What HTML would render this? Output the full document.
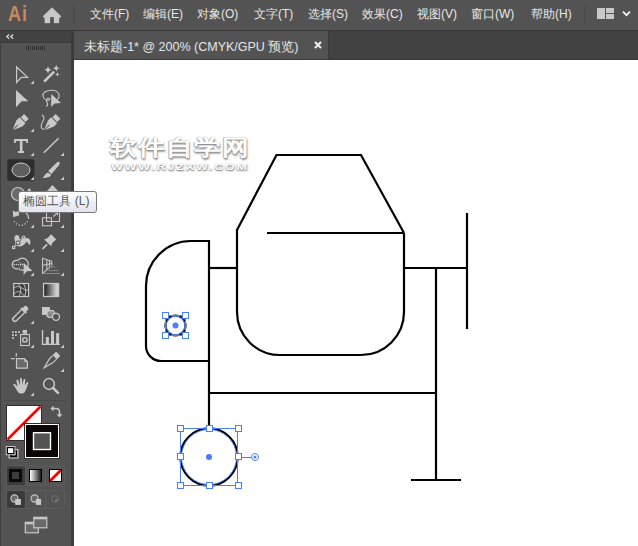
<!DOCTYPE html>
<html><head><meta charset="utf-8">
<style>
*{margin:0;padding:0;box-sizing:border-box}
html,body{width:638px;height:546px;overflow:hidden;background:#535353;font-family:"Liberation Sans",sans-serif}
.abs{position:absolute}
#menubar{left:0;top:0;width:638px;height:30px;background:#535353}
.mi{position:absolute;top:7px;font-size:12px;color:#e6e6e6;white-space:nowrap;line-height:15px}
#ai{left:8.3px;top:2.5px;font-size:21.5px;font-weight:bold;color:#c98862;line-height:22px;letter-spacing:1px;transform-origin:0 0;transform:scaleX(0.84)}
#tabbar{left:73px;top:30px;width:565px;height:30px;background:#424242;border-top:1px solid #393939;border-bottom:1px solid #3a3a3a}
#tab{left:74px;top:31px;width:254px;height:28px;background:#535353}
#tabtxt{left:84px;top:39.5px;font-size:12.5px;color:#e6e6e6;white-space:nowrap;line-height:15px}
#canvas{left:74px;top:60px;width:564px;height:486px;background:#fff}
#gap{left:71px;top:30px;width:3px;height:516px;background:#3c3c3c}
#panel{left:0;top:30px;width:71px;height:516px;background:#535353;border-left:1px solid #3f3f3f}
#phead{left:0;top:30px;width:71px;height:13px;background:#424242;border-top:1px solid #393939;border-bottom:1px solid #3a3a3a}
</style></head><body>
<div id="menubar" class="abs"></div>
<div id="ai" class="abs">Ai</div>
<svg class="abs" style="left:0;top:0" width="638" height="30">
  <path d="M52 7.6 L61.2 16.4 L59 18.3 V23 H54 V17 H50 V23 H44.8 V18.3 L42.8 16.4 Z" fill="#c8c8c8" stroke="#c8c8c8" stroke-width="0.3" stroke-linejoin="round"/>
  <rect x="73.5" y="5" width="1.5" height="20" fill="#4a4a4a"/>
  <rect x="584" y="5" width="2" height="20" fill="#4d4d4d"/>
  <rect x="597" y="8" width="8" height="11" fill="#c8c8c8"/>
  <rect x="606" y="8" width="8" height="5" fill="#c8c8c8"/>
  <rect x="606" y="14" width="8" height="5" fill="#c8c8c8"/>
  <path d="M623 11.6 L626.5 15.1 L630 11.6" stroke="#f0f0f0" stroke-width="1.9" fill="none"/>
</svg>
<div class="mi" style="left:90px">文件(F)</div>
<div class="mi" style="left:143px">编辑(E)</div>
<div class="mi" style="left:197px">对象(O)</div>
<div class="mi" style="left:254px">文字(T)</div>
<div class="mi" style="left:308px">选择(S)</div>
<div class="mi" style="left:362px">效果(C)</div>
<div class="mi" style="left:417px">视图(V)</div>
<div class="mi" style="left:471px">窗口(W)</div>
<div class="mi" style="left:531px">帮助(H)</div>

<div id="tabbar" class="abs"></div>
<div id="tab" class="abs"></div>
<div class="abs" style="left:328px;top:31px;width:1px;height:28px;background:#393939"></div>
<div id="tabtxt" class="abs">未标题-1* @ 200% (CMYK/GPU 预览)</div>
<svg class="abs" style="left:310px;top:37.3px" width="16" height="16">
  <path d="M5 5 L11 11 M11 5 L5 11" stroke="#f0f0f0" stroke-width="2"/>
</svg>
<div id="gap" class="abs"></div>
<div id="panel" class="abs"></div>
<div id="phead" class="abs"></div>
<svg class="abs" style="left:0;top:0" width="72" height="546">
<g fill="#c8c8c8" stroke="none">
  <!-- small triangles -->
  <path d="M30.5 84 H34 V80.5 Z"/>
  <path d="M30.5 132 H34 V128.5 Z"/>
  <path d="M30.5 156 H34 V152.5 Z"/><path d="M60.5 156 H64 V152.5 Z"/>
  <path d="M30.5 180 H34 V176.5 Z"/><path d="M60.5 180 H64 V176.5 Z"/>
  <path d="M30.5 228 H34 V224.5 Z"/><path d="M60.5 228 H64 V224.5 Z"/>
  <path d="M30.5 252 H34 V248.5 Z"/><path d="M60.5 252 H64 V248.5 Z"/>
  <path d="M30.5 276 H34 V272.5 Z"/><path d="M60.5 276 H64 V272.5 Z"/>
  <path d="M30.5 324 H34 V320.5 Z"/>
  <path d="M30.5 348 H34 V344.5 Z"/><path d="M60.5 348 H64 V344.5 Z"/>
  <path d="M60.5 372 H64 V368.5 Z"/>
  <path d="M30.5 396 H34 V392.5 Z"/>
</g>
<g fill="none" stroke="#c8c8c8" stroke-width="1.2">
  <!-- selection -->
  <path d="M16.6 67 V82.5 L21.4 77.4 H27.6 Z"/>
</g>
<g fill="#c8c8c8">
  <!-- direct selection -->
  <path d="M16 90 V107.2 L21.6 101.3 H28.3 Z"/>
  <!-- magic wand -->
  <path d="M43.2 80.7 L53.2 70.7 L55.1 72.6 L45.1 82.6 Z"/>
  <path d="M48.00 66.20 L49.13 68.67 L51.60 69.80 L49.13 70.93 L48.00 73.40 L46.87 70.93 L44.40 69.80 L46.87 68.67 Z"/>
  <path d="M56.30 65.10 L57.33 67.27 L59.50 68.30 L57.33 69.33 L56.30 71.50 L55.27 69.33 L53.10 68.30 L55.27 67.27 Z"/>
  <path d="M57.40 72.20 L58.11 73.69 L59.60 74.40 L58.11 75.11 L57.40 76.60 L56.69 75.11 L55.20 74.40 L56.69 73.69 Z"/>
  <!-- lasso arrow -->
  <path d="M51.2 94 V107 L54.5 103.5 L61 103 Z"/>
</g>
<g fill="none" stroke="#c8c8c8" stroke-width="1.1">
  <path d="M57.5 99.5 C60.5 96.5 59.5 90.5 51.5 90.3 C45.5 90.2 42.5 93 43 96 C43.4 98.5 46 100.3 48.8 100.2 C50.3 100 49.8 97.8 48 98.3 C45.8 99 46.3 101.5 47.2 102.8 C48 104 47.5 105.5 46.2 106.5"/>
</g>
<!-- pen -->
<g transform="translate(19.7 123.1) rotate(45) scale(0.92)" fill="#c8c8c8">
  <rect x="-3.6" y="-10.3" width="7.2" height="5"/>
  <path d="M-4.6 -4.3 H4.6 V0.5 L0.8 9.5 H-0.8 L-4.6 0.5 Z"/>
  <path d="M-0.5 9.5 V2.5 H0.5 V9.5 Z" fill="#535353"/>
</g>
<!-- curvature pen -->
<g transform="translate(51.3 123.1) rotate(45) scale(0.92)" fill="#c8c8c8">
  <rect x="-3.6" y="-10.3" width="7.2" height="5"/>
  <path d="M-4.6 -4.3 H4.6 V0.5 L0.8 9.5 H-0.8 L-4.6 0.5 Z"/>
  <path d="M-0.5 9.5 V2.5 H0.5 V9.5 Z" fill="#535353"/>
</g>
<path d="M42 115 C44 116.5 44.5 118 43.5 120 C41.5 123.5 40.5 126 41.5 128 C42 129 43 129.4 44.5 129.2" fill="none" stroke="#c8c8c8" stroke-width="1.1"/>
<!-- type -->
<g fill="#c8c8c8">
  <path d="M14 139 H28 V143 H26.2 V141.1 H22.5 V151 H24 V153 H18 V151 H19.9 V141.1 H15.8 V143 H14 Z"/>
</g>
<path d="M43.8 152.8 L58.6 138.3" stroke="#c8c8c8" stroke-width="1.6"/>
<!-- ellipse highlighted -->
<rect x="7.3" y="159.3" width="27.1" height="21.4" rx="2" fill="#2e2e2e"/>
<ellipse cx="21" cy="170" rx="9" ry="7" fill="#5e5e5e" stroke="#c8c8c8" stroke-width="1"/>
<path d="M30.5 180 H34 V176.5 Z" fill="#c8c8c8"/>
<!-- brush -->
<g fill="#c8c8c8">
  <path d="M59.6 162 C59.2 161.3 57.8 161.8 56.5 162.8 L48.2 171 L51.5 174 L58.8 165.5 C59.6 164.3 59.9 162.6 59.6 162 Z"/>
  <path d="M48 172.7 C46 173 45 174.5 44.5 175.8 L42.6 178 C45 178 49 177.5 50.5 176 C51.5 175 51 173.5 48 172.7 Z"/>
</g>
<!-- shaper -->
<circle cx="18" cy="194" r="6.5" fill="#6a6a6a" stroke="#c8c8c8" stroke-width="1.2"/>
<path d="M26.5 192 L29.3 188 L32 192 Z" fill="#c8c8c8"/>
<path d="M46.5 191.5 L52.5 185 L58.5 191.5 Z" fill="#c8c8c8"/>
<!-- rotate -->
<path d="M12.8 210.6 L15.6 212 L18.6 211 L19.3 215.2 L13.2 217.2 Z" fill="#c8c8c8"/>
<path d="M25.5 212.5 A7.5 7.5 0 0 1 28.5 219" stroke="#c8c8c8" stroke-width="1.2" fill="none"/>
<path d="M27.5 221.3 A7.5 7.5 0 0 1 14 220.8" stroke="#c8c8c8" stroke-width="1.3" fill="none" stroke-dasharray="1.1 1.9"/>
<!-- scale -->
<g fill="none" stroke="#c8c8c8" stroke-width="1.1">
  <rect x="42.5" y="217.8" width="9" height="8"/>
  <path d="M46.5 213 V221.5 H59.5 V213"/>
  <path d="M53.3 216.5 L57.3 212.8 M55 212.8 H57.5 V215.3"/>
</g>
</svg>
<div id="canvas" class="abs"></div>
<svg class="abs" style="left:0;top:0" width="72" height="546">
<!-- width tool -->
<path fill="#c8c8c8" d="M14.6 239.5 C14 237.5 14.8 235.2 16.6 235.1 C18.4 235 19.6 236.8 19.6 238.5 C19.6 239.3 20.5 239.6 21.5 239.3 L25.5 238.2 C28.2 237.6 30.3 239 30.4 241.5 C30.5 243.3 30.2 244.8 29.5 245 C28.8 245.1 28.5 243.8 28 242.8 C27.5 241.8 26.5 241.8 25.5 243 C24 245 22 246.6 19.5 246.6 C16.8 246.6 15 245 15 243 C15 241.8 15 240.6 14.6 239.5 Z"/>
<path d="M13.6 247.4 L23.3 237.6" stroke="#c8c8c8" stroke-width="1.1"/>
<path d="M15.5 245.5 L21.5 239.5" stroke="#535353" stroke-width="0.8"/>
<circle cx="18" cy="242.8" r="2" fill="#c8c8c8" stroke="#454545" stroke-width="0.9"/>
<rect x="12" y="245.8" width="3.3" height="3.3" fill="#c8c8c8"/>
<rect x="13.1" y="246.9" width="1.1" height="1.1" fill="#535353"/>
<circle cx="23.6" cy="237.3" r="1.9" fill="#c8c8c8"/>
<circle cx="23.6" cy="237.3" r="0.7" fill="#535353"/>
<!-- pin -->
<g fill="#c8c8c8">
  <path d="M44 239.2 C45.8 239 47.2 238.5 48.4 237.2 L51.1 234.2 L56.3 239.4 L53.3 242.1 C52 243.3 51.5 244.7 51.4 246.4 Z"/>
  <path d="M42 248.2 L46.5 243.7 L47.7 244.9 L43.2 249.4 Z"/>
</g>
<!-- shape builder -->
<circle cx="22.3" cy="264.2" r="6" fill="none" stroke="#c8c8c8" stroke-width="1.2"/>
<circle cx="16.5" cy="264.6" r="4.3" fill="#535353" stroke="#8a8a8a" stroke-width="1"/>
<path d="M17.62 260.45 A4.3 4.3 0 1 0 18.17 268.56" fill="none" stroke="#c8c8c8" stroke-width="1.2"/>
<g fill="#c8c8c8">
  <circle cx="14.3" cy="264.5" r="0.8"/><circle cx="16.4" cy="264.5" r="0.8"/><circle cx="18.5" cy="264.5" r="0.8"/><circle cx="20.6" cy="264.5" r="0.8"/><circle cx="22.7" cy="264.5" r="0.8"/>
  <path d="M23.6 262.8 V275 L26.8 271.3 L32.6 270.9 Z"/>
</g>
<!-- perspective grid -->
<g fill="none" stroke="#c8c8c8" stroke-width="1.1">
  <path d="M42.6 258.2 V273.4 L51.8 265.8 V261.3 Z"/>
  <path d="M46.8 259.6 V270 M49.5 260.5 V267.7 M42.6 265.3 L51.8 263.5"/>
</g>
<g fill="#6f6f6f"><path d="M51.8 265 L57 268 H49 Z"/></g>
<g stroke="#8a8a8a" stroke-width="1">
  <path d="M48.5 270.6 H58.6"/><path d="M44 273.5 H60"/>
</g>
<!-- mesh -->
<g fill="#404040" stroke="#c8c8c8" stroke-width="1.2">
  <rect x="13.7" y="283.5" width="14.9" height="13"/>
</g>
<g fill="none" stroke="#c8c8c8" stroke-width="0.9">
  <path d="M14 288 C16 286 18.5 286.5 20 287 C22 288 23.5 289 26 290.2 H28.5"/>
  <path d="M14 294 C16 291.5 19 291 21 292.5 C23 294 24 295.5 24.5 296.5"/>
  <path d="M18 283.8 C20.5 286 21 289 20.5 292 C20 294 19.5 295 19.5 296.5"/>
  <path d="M23.5 283.8 C25.5 286.5 26 290 25.5 293 C25.3 294.5 24.8 295.5 24.6 296.5"/>
</g>
<!-- gradient -->
<defs><linearGradient id="gr" x1="0" x2="1"><stop offset="0" stop-color="#161616"/><stop offset="0.85" stop-color="#d0d0d0"/></linearGradient>
<linearGradient id="gr2" x1="0" x2="1"><stop offset="0" stop-color="#ffffff"/><stop offset="1" stop-color="#1a1a1a"/></linearGradient></defs>
<rect x="43.6" y="283.5" width="15" height="13" fill="url(#gr)" stroke="#c8c8c8" stroke-width="1.3"/>
<!-- eyedropper -->
<g transform="translate(20.2 314) rotate(45)">
  <rect x="-2.6" y="-10" width="5.2" height="5" rx="2" fill="#c8c8c8"/>
  <rect x="-3.6" y="-6" width="7.2" height="2.2" fill="#c8c8c8"/>
  <path d="M-2.1 -3.8 V7.5 A2.1 2.1 0 0 0 2.1 7.5 V-3.8" fill="none" stroke="#c8c8c8" stroke-width="1.5"/>
  <path d="M-1.5 -2 H1.5 M-1.5 0 H1.5 M-1.5 2 H1.5" stroke="#3c3c3c" stroke-width="0.8"/>
</g>
<!-- blend -->
<rect x="42" y="307" width="7.9" height="7.9" fill="#c8c8c8"/>
<path d="M48.5 310.6 H53 L54.5 312.2 V316 L53 317.5 H48.5 L47 316 V312.2 Z" fill="#8c8c8c" stroke="#c8c8c8" stroke-width="1.2"/>
<circle cx="56" cy="316.8" r="3.5" fill="#535353" stroke="#c8c8c8" stroke-width="1.3"/>
<!-- symbol sprayer -->
<g fill="#c8c8c8">
  <rect x="12" y="331.2" width="1.8" height="1.8"/><rect x="15" y="331.2" width="1.8" height="1.8"/><rect x="18.1" y="331.2" width="1.8" height="1.8"/>
  <rect x="12" y="334.2" width="1.8" height="1.8"/><rect x="15" y="334.2" width="1.8" height="1.8"/>
  <rect x="12" y="337.1" width="1.8" height="1.8"/>
  <path d="M22.2 331.3 L23.2 330 H27 V333.8 H22.8 V332 Z"/>
</g>
<rect x="20.6" y="334.5" width="8.8" height="11" fill="none" stroke="#c8c8c8" stroke-width="1.1"/>
<circle cx="24.9" cy="339.8" r="2.2" fill="none" stroke="#c8c8c8" stroke-width="1.4"/>
<!-- graph -->
<g fill="#c8c8c8">
  <rect x="41.9" y="330" width="1.3" height="15"/><rect x="41.9" y="343.7" width="18" height="1.3"/>
  <rect x="45.9" y="337" width="3" height="7"/><rect x="51" y="331" width="3" height="13"/><rect x="56.1" y="333.1" width="3" height="11"/>
</g>
<!-- artboard -->
<g stroke="#c8c8c8" stroke-width="1.2" fill="none">
  <path d="M16.3 353 V356.8 M10.9 358.6 H14.9"/>
  <path d="M16.5 358.7 H24.3 L27.4 361.7 V368.2 H16.5 Z" fill="#6a6a6a"/>
</g>
<path d="M24.3 358.7 V361.7 H27.4 Z" fill="#c8c8c8"/>
<!-- slice -->
<g transform="translate(50.5 361.5) rotate(45)">
  <rect x="-3" y="-11" width="6" height="5" rx="1" fill="#c8c8c8"/>
  <path d="M-2.6 -6 V-1 L0 9 L2.6 -1 V-6" fill="none" stroke="#c8c8c8" stroke-width="1.2"/>
</g>
<!-- hand -->
<g fill="#c8c8c8">
  <path d="M14 385.5 C13 385 13 384.5 13.6 384.2 C14.5 383.8 15.5 384.5 16.5 385.5 L17.8 387 L16.3 380.8 C16 379.8 17.8 379.2 18.4 380.2 L20 385.5 L20 378.8 C20 377.8 21.8 377.8 21.9 378.8 L22.4 385 L23.6 379.6 C23.9 378.6 25.6 378.8 25.3 380 L24.8 385.8 L26.7 382.4 C27.2 381.5 28.6 382 28.2 383.2 L26 389.5 C25 392.5 23.5 393.6 21.3 393.6 C19 393.6 18 392.5 17 390.5 Z"/>
</g>
<!-- zoom -->
<circle cx="49" cy="384" r="5.4" fill="none" stroke="#c8c8c8" stroke-width="1.5"/>
<path d="M53.2 388 L58 392.8" stroke="#c8c8c8" stroke-width="2.6" stroke-linecap="round"/>
<!-- separator -->
<rect x="6" y="400" width="60" height="1" fill="#4a4a4a"/>
<!-- fill swatch -->
<rect x="6.5" y="405.5" width="35" height="35" fill="#fff" stroke="#2f2f2f" stroke-width="1"/>
<path d="M7.5 439.5 L40.5 406.5" stroke="#f00" stroke-width="2.6"/>
<!-- stroke swatch -->
<rect x="24" y="423" width="36" height="36" fill="#2f2f2f"/>
<rect x="25" y="424" width="34" height="34" fill="#fff"/>
<rect x="26" y="425" width="32" height="32" fill="#0a0606"/>
<rect x="32.8" y="432" width="18.4" height="18.2" fill="#fff"/>
<rect x="34.2" y="433.4" width="15.6" height="15.4" fill="#535353"/>
<!-- swap arrow -->
<g fill="none" stroke="#c8c8c8" stroke-width="1.6">
  <path d="M52 408.5 H56 C58.5 408.5 59.5 410 59.5 412 V415"/>
</g>
<g fill="#c8c8c8">
  <path d="M50.5 408.5 L53.5 405.6 V411.4 Z"/>
  <path d="M59.5 417.5 L56.6 414.3 H62.4 Z"/>
</g>
<!-- default fill/stroke -->
<rect x="8.5" y="449" width="10" height="9.5" fill="#c8c8c8"/>
<rect x="9.8" y="450.2" width="7.4" height="7.1" fill="#000"/>
<path d="M15.3 451.5 V455 H12" fill="none" stroke="#b8b8b8" stroke-width="0.8"/>
<rect x="5.8" y="446" width="9.6" height="9.2" fill="#c8c8c8"/>
<rect x="6.8" y="447" width="7.6" height="7.2" fill="#000"/>
<rect x="8" y="448.2" width="5.2" height="4.8" fill="#fff"/>
<!-- color mode group -->
<rect x="6.5" y="466" width="58" height="19" rx="2.5" fill="none" stroke="#5c5c5c" stroke-width="1"/>
<rect x="7" y="466.5" width="18" height="18.5" rx="1.5" fill="#3a3a3a"/>
<path d="M25.5 466 V485 M45.5 466 V485" stroke="#5c5c5c" stroke-width="1"/>
<rect x="9" y="469" width="13" height="13" fill="#0a0808"/>
<rect x="12" y="472" width="7" height="7" fill="#3c3c3c"/>
<rect x="29" y="469" width="13" height="13" fill="#000"/>
<rect x="30" y="470" width="11" height="11" fill="url(#gr2)"/>
<rect x="49" y="469" width="13" height="13" fill="#000"/>
<rect x="50" y="470" width="11" height="11" fill="#fff"/>
<clipPath id="nc"><rect x="50" y="470" width="11" height="11"/></clipPath><path d="M49 482 L62 469" stroke="#f00" stroke-width="2.8" clip-path="url(#nc)"/>
<!-- draw mode group -->
<rect x="6.5" y="490.5" width="58" height="18" rx="2.5" fill="none" stroke="#5c5c5c" stroke-width="1"/>
<rect x="7" y="491" width="18" height="17" rx="1.5" fill="#3a3a3a"/>
<path d="M25.5 490.5 V508.5 M45.5 490.5 V508.5" stroke="#5c5c5c" stroke-width="1"/>
<circle cx="14.5" cy="498.5" r="3.6" fill="#6a6a6a" stroke="#c8c8c8" stroke-width="1.1"/>
<rect x="15.2" y="499" width="5.7" height="5.9" fill="#c8c8c8"/>
<circle cx="34.6" cy="498.5" r="3.6" fill="#6a6a6a" stroke="#c8c8c8" stroke-width="1.1"/>
<rect x="35.9" y="499" width="5.2" height="5.9" fill="#c8c8c8"/>
<circle cx="55" cy="499" r="3.4" fill="none" stroke="#717171" stroke-width="1"/>
<path d="M55 499 H58.4 A3.4 3.4 0 0 1 55 502.4 Z" fill="#717171"/>
<!-- screen mode -->
<rect x="25.3" y="522.3" width="13" height="10.5" fill="#6a6a6a" stroke="#c8c8c8" stroke-width="1.2"/>
<rect x="33.8" y="517.3" width="13" height="10.5" fill="#6a6a6a" stroke="#c8c8c8" stroke-width="1.2"/>
<rect x="33.8" y="517.3" width="13" height="2" fill="#c8c8c8"/>
<rect x="25.3" y="522.3" width="8" height="2" fill="#c8c8c8"/>
<!-- panel header chevrons and grip -->
<path d="M5.8 36.6 L9.2 33.8 V35.4 L7.8 36.6 L9.2 37.8 V39.4 Z M9.8 36.6 L13.2 33.8 V35.4 L11.8 36.6 L13.2 37.8 V39.4 Z" fill="#d8d8d8"/>
<g fill="#2e2e2e">
  <rect x="26" y="46" width="1" height="4"/><rect x="28" y="46" width="1" height="4"/><rect x="30" y="46" width="1" height="4"/><rect x="32" y="46" width="1" height="4"/><rect x="34" y="46" width="1" height="4"/>
  <rect x="36" y="46" width="1" height="4"/><rect x="38" y="46" width="1" height="4"/><rect x="40" y="46" width="1" height="4"/><rect x="42" y="46" width="1" height="4"/><rect x="44" y="46" width="1" height="4"/>
</g>
</svg>
<div class="abs" style="left:18px;top:191px;width:79px;height:22px;border:1px solid #7a7a7a;border-radius:3px;background:linear-gradient(#ffffff,#e2e3ee);"></div>
<div class="abs" style="left:23.4px;top:193.6px;font-size:12px;color:#575757;white-space:nowrap;line-height:15px">椭圆工具 (L)</div>
<div class="abs" style="left:110px;top:136px;font-size:27px;font-weight:bold;color:#fff;white-space:nowrap;line-height:28px;letter-spacing:1px;text-shadow:0 1px 1px #909090, 1px 2px 2px #a8a8a8, 0 0 1px #a8a8a8, -1px 0 1px #c8c8c8;transform-origin:0 0;transform:scale(1.0,0.82)">软件自学网</div>
<div class="abs" style="left:111px;top:161px;font-size:9.5px;font-weight:bold;color:#fff;white-space:nowrap;line-height:11px;letter-spacing:1.5px;text-shadow:0 1px 1px #909090, 1px 1px 2px #a8a8a8, 0 0 1px #b0b0b0;transform-origin:0 0;transform:scaleX(1.3)">WWW.RJZXW.COM</div>

<svg class="abs" style="left:0;top:0" width="638" height="546">
<g fill="none" stroke="#000" stroke-width="2.2" stroke-linejoin="miter">
  <path d="M237 230 L276.5 155 H361 L404 233"/>
  <path d="M237 229 V312 A43 43 0 0 0 280 355 H361 A43 43 0 0 0 404 312 V233"/>
  <path d="M267 233 H404"/>
  <path d="M209 241 H191 A45 45 0 0 0 146 286 V346 A15 15 0 0 0 161 361 H209"/>
  <path d="M209 240 V428.5"/>
  <path d="M209 268 H237"/>
  <path d="M404 268 H467"/>
  <path d="M467 213 V329"/>
  <path d="M436 268 V480"/>
  <path d="M411 480 H461"/>
  <path d="M209 393 H436"/>
  <circle cx="209" cy="457" r="28.6"/>
  <circle cx="175.5" cy="325.5" r="10"/>
</g>
<g fill="none" stroke="#4a7dff" stroke-width="1">
  <circle cx="209" cy="457" r="27.6"/>
  <rect x="180.5" y="428.5" width="57" height="57"/>
  <path d="M241 457.5 H251.5"/>
  <circle cx="255" cy="457" r="3.5"/>
  <circle cx="175.5" cy="325.5" r="9.5"/>
  <rect x="165.5" y="315.5" width="20" height="20"/>
</g>
<g fill="#fff" stroke="#4a7dff" stroke-width="1">
  <rect x="177.5" y="425.5" width="6" height="6"/>
  <rect x="206.5" y="425.5" width="6" height="6"/>
  <rect x="235.5" y="425.5" width="6" height="6"/>
  <rect x="177.5" y="453.5" width="6" height="6"/>
  <rect x="235.5" y="453.5" width="6" height="6"/>
  <rect x="177.5" y="482.5" width="6" height="6"/>
  <rect x="206.5" y="482.5" width="6" height="6"/>
  <rect x="235.5" y="482.5" width="6" height="6"/>
  <rect x="162.5" y="312.5" width="6" height="6"/>
  <rect x="182.5" y="312.5" width="6" height="6"/>
  <rect x="162.5" y="332.5" width="6" height="6"/>
  <rect x="182.5" y="332.5" width="6" height="6"/>
</g>
<g fill="#4a7dff">
  <circle cx="209" cy="457" r="3"/>
  <circle cx="175.5" cy="325.5" r="3"/>
  <circle cx="255" cy="457" r="1.5"/>
</g>
</svg>

</body></html>
